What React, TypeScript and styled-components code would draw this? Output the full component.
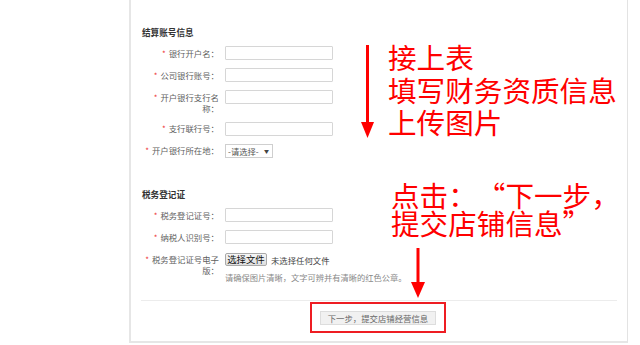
import React from "react";
import styled, { createGlobalStyle } from "styled-components";

const Global = createGlobalStyle`
  html, body { margin: 0; padding: 0; background: #fff; }
  body { font-family: "Noto Sans CJK SC", "Noto Sans", sans-serif; }
  * { box-sizing: border-box; }
`;

const Page = styled.div`
  position: relative;
  width: 640px;
  height: 345px;
  overflow: hidden;
  background: #fff;
`;

const Panel = styled.div`
  margin-left: 129px;
  width: 499px;
  height: 343px;
  border-left: 2px solid #e6e6e6;
  border-right: 1px solid #e3e3e3;
  border-bottom: 2px solid #e6e6e6;
  padding: 26px 11px 0 9px;
  display: flex;
  flex-direction: column;
`;

const Section = styled.div<{ $gapTop?: number }>`
  display: flex;
  flex-direction: column;
  margin-top: ${(p) => p.$gapTop ?? 0}px;
`;

const SectionTitle = styled.div`
  font-size: 8.6px;
  line-height: 12px;
  height: 12px;
  font-weight: 700;
  color: #333;
  padding-left: 2px;
  margin-bottom: 8px;
`;

const Rows = styled.div`
  display: flex;
  flex-direction: column;
  gap: 8px;
`;

const Row = styled.div`
  display: flex;
  align-items: flex-start;
`;

const Label = styled.div`
  width: 79px;
  padding-top: 1.5px;
  text-align: right;
  font-size: 8.4px;
  line-height: 11px;
  color: #5f5f5f;
  flex-shrink: 0;
`;

const Star = styled.span`
  color: #e33;
  margin-right: 3px;
  font-size: 8px;
`;

const Field = styled.div`
  margin-left: 6px;
  display: flex;
  flex-direction: column;
`;

const TextInput = styled.div`
  width: 108px;
  height: 14px;
  border: 1px solid #d6d6d6;
  border-radius: 1px;
  background: #fff;
`;

const Select = styled.div`
  width: 48px;
  height: 14px;
  border: 1px solid #cfcfcf;
  display: flex;
  align-items: center;
  justify-content: space-between;
  padding: 0 3px 0 2px;
  font-size: 8.3px;
  color: #555;
  background: #fff;
`;

const Caret = styled.span`
  font-size: 5px;
  color: #444;
`;

const FileLine = styled.div`
  display: flex;
  align-items: center;
  margin-top: 1px;
  gap: 4px;
`;

const FileButton = styled.div`
  width: 42px;
  height: 13px;
  border: 1px solid #a9a9a9;
  border-radius: 2px;
  background: linear-gradient(#f6f6f6, #dedede);
  font-size: 9.4px;
  line-height: 11px;
  color: #111;
  text-align: center;
`;

const FileStatus = styled.span`
  font-size: 8.4px;
  color: #444;
`;

const Hint = styled.div`
  margin-top: 6px;
  font-size: 8.25px;
  line-height: 11px;
  color: #888;
  white-space: nowrap;
`;

const Divider = styled.div`
  margin-top: 17px;
  height: 1px;
  background: #ececec;
  width: 476px;
  margin-left: 1px;
`;

const Footer = styled.div`
  display: flex;
  justify-content: center;
  margin-top: 1px;
`;

const RedFrame = styled.div`
  border: 2px solid #ee1d23;
  padding: 7px 8px 6px;
`;

const NextButton = styled.div`
  width: 116px;
  height: 14px;
  background: #f1f1f1;
  border: 1px solid #ddd;
  font-size: 8.4px;
  line-height: 12px;
  color: #666;
  text-align: center;
`;

const Note = styled.div<{ $x: number; $y: number; $lh: number }>`
  position: absolute;
  left: ${(p) => p.$x}px;
  top: ${(p) => p.$y}px;
  font-size: 28.6px;
  line-height: ${(p) => p.$lh}px;
  color: #ff0000;
  white-space: nowrap;
  font-family: "Noto Sans CJK SC", sans-serif;
`;

const Quote = styled.span<{ $side: "open" | "close" }>`
  display: inline-block;
  width: 28.6px;
  text-align: ${(p) => (p.$side === "open" ? "right" : "left")};
`;

const ArrowSvg = styled.svg<{ $x: number; $y: number }>`
  position: absolute;
  left: ${(p) => p.$x}px;
  top: ${(p) => p.$y}px;
`;

function Arrow({ x, y, h, w, head }: { x: number; y: number; h: number; w: number; head: number }) {
  const c = w / 2;
  return (
    <ArrowSvg $x={x} $y={y} width={w} height={h} viewBox={`0 0 ${w} ${h}`}>
      <rect x={c - 1.5} y={0} width={3} height={h - head + 1} fill="#ff0000" />
      <polygon points={`0,${h - head} ${w},${h - head} ${c},${h}`} fill="#ff0000" />
    </ArrowSvg>
  );
}

type RowDef = { label: string; kind: "input" | "select" };

const bankRows: RowDef[] = [
  { label: "银行开户名：", kind: "input" },
  { label: "公司银行账号：", kind: "input" },
  { label: "开户银行支行名称：", kind: "input" },
  { label: "支行联行号：", kind: "input" },
  { label: "开户银行所在地：", kind: "select" },
];

const taxRows: RowDef[] = [
  { label: "税务登记证号：", kind: "input" },
  { label: "纳税人识别号：", kind: "input" },
];

function FormRow({ label, kind }: RowDef) {
  return (
    <Row>
      <Label>
        <Star>*</Star>
        {label}
      </Label>
      <Field>
        {kind === "input" ? (
          <TextInput />
        ) : (
          <Select>
            <span>-请选择-</span>
            <Caret>▼</Caret>
          </Select>
        )}
      </Field>
    </Row>
  );
}

export default function App() {
  return (
    <>
      <Global />
      <Page>
        <Panel>
          <Section>
            <SectionTitle>结算账号信息</SectionTitle>
            <Rows>
              {bankRows.map((r) => (
                <FormRow key={r.label} {...r} />
              ))}
            </Rows>
          </Section>
          <Section $gapTop={30.5}>
            <SectionTitle>税务登记证</SectionTitle>
            <Rows>
              {taxRows.map((r) => (
                <FormRow key={r.label} {...r} />
              ))}
              <Row>
                <Label>
                  <Star>*</Star>
                  税务登记证号电子版：
                </Label>
                <Field>
                  <FileLine>
                    <FileButton>选择文件</FileButton>
                    <FileStatus>未选择任何文件</FileStatus>
                  </FileLine>
                  <Hint>请确保图片清晰，文字可辨并有清晰的红色公章。</Hint>
                </Field>
              </Row>
            </Rows>
          </Section>
          <Divider />
          <Footer>
            <RedFrame>
              <NextButton>下一步，提交店铺经营信息</NextButton>
            </RedFrame>
          </Footer>
        </Panel>
        <Arrow x={361} y={45} w={13} h={93} head={16} />
        <Note $x={388} $y={41} $lh={32.5}>
          接上表
          <br />
          填写财务资质信息
          <br />
          上传图片
        </Note>
        <Note $x={391} $y={181} $lh={28}>
          点击：<Quote $side="open">“</Quote>下一步，
          <br />
          提交店铺信息<Quote $side="close">”</Quote>
        </Note>
        <Arrow x={411} y={248} w={14} h={50} head={16} />
      </Page>
    </>
  );
}
